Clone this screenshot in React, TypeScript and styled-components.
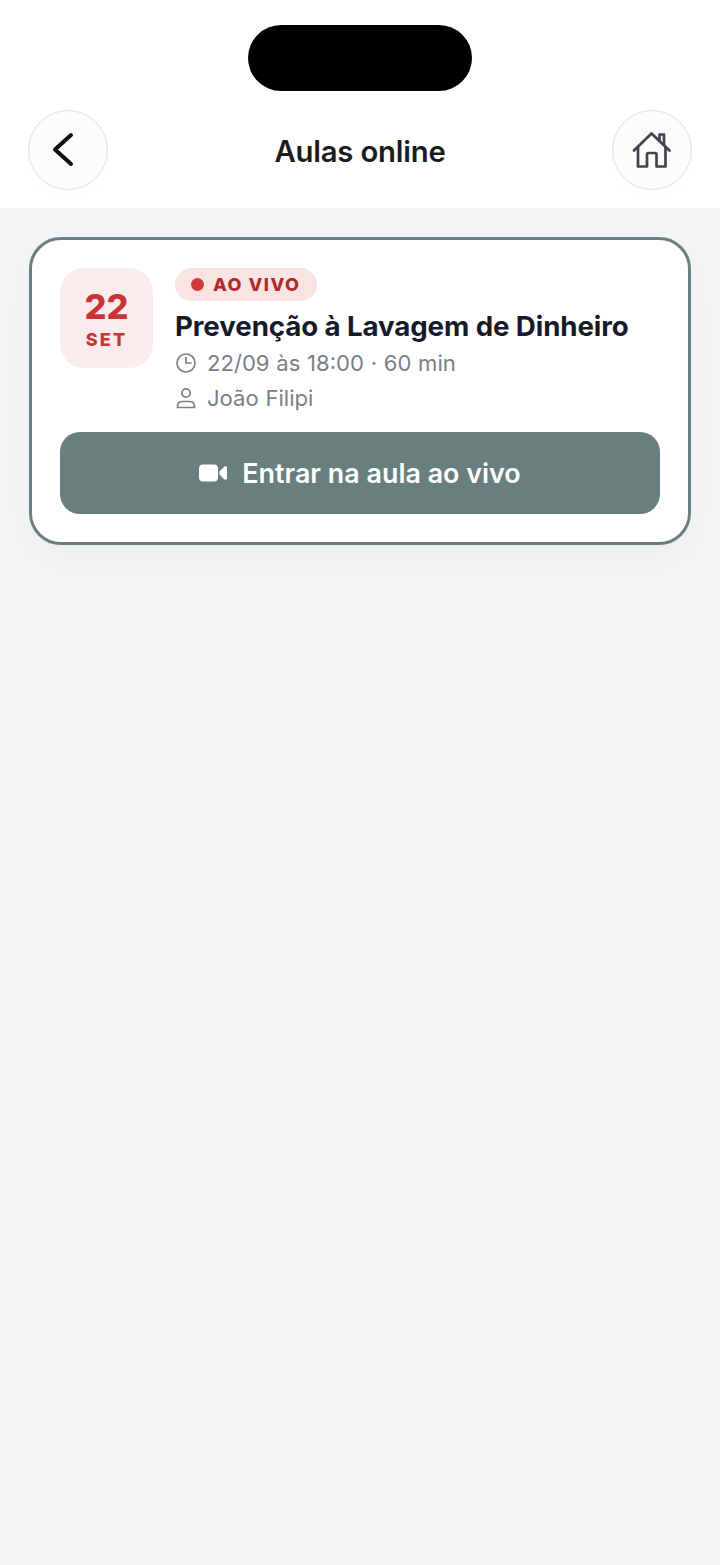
import styled, { createGlobalStyle } from 'styled-components';

const GlobalStyle = createGlobalStyle`
  html, body {
    margin: 0;
    padding: 0;
    background: #f2f4f6;
    font-family: Inter, "Liberation Sans", sans-serif;
    -webkit-font-smoothing: antialiased;
  }
`;

const Page = styled.div`
  width: 720px;
  height: 1565px;
  background: #f2f4f6;
  overflow: hidden;
`;

const Header = styled.header`
  height: 208px;
  box-sizing: border-box;
  background: #ffffff;
  padding: 25px 28px 0;
  display: flex;
  flex-direction: column;
`;

const Island = styled.div`
  width: 224px;
  height: 66px;
  margin: 0 auto 19px;
  border-radius: 33px;
  background: #000000;
`;

const NavRow = styled.div`
  display: flex;
  align-items: center;
  justify-content: space-between;
`;

const RoundButton = styled.button`
  width: 80px;
  height: 80px;
  padding: 0;
  box-sizing: border-box;
  border: 1px solid #e0e0e0;
  border-radius: 50%;
  background: radial-gradient(circle at 50% 45%, #fbfbfb 0%, #fcfcfc 65%, #ffffff 100%);
  box-shadow: 0 8px 14px rgba(0, 0, 0, 0.012);
  display: flex;
  align-items: center;
  justify-content: center;
`;

const Title = styled.h1`
  margin: 0;
  padding-top: 2px;
  font-size: 29.3px;
  font-weight: 600;
  letter-spacing: -0.2px;
  color: #1c1c1e;
`;

const Content = styled.main`
  padding: 29px 29px 0;
`;

const Card = styled.section`
  box-sizing: border-box;
  width: 662px;
  height: 308px;
  padding: 28px;
  border: 3px solid #6a807d;
  border-radius: 32px;
  background: #ffffff;
  box-shadow: 0 14px 40px rgba(20, 30, 40, 0.03);
  display: flex;
  flex-direction: column;
  gap: 17px;
`;

const Top = styled.div`
  display: flex;
  gap: 22px;
`;

const DateBox = styled.div`
  width: 93px;
  height: 100px;
  flex-shrink: 0;
  box-sizing: border-box;
  padding-top: 4px;
  border-radius: 24px;
  background: #faecec;
  color: #c93434;
  display: flex;
  flex-direction: column;
  align-items: center;
  justify-content: center;
`;

const Day = styled.span`
  font-size: 34.5px;
  line-height: 38px;
  font-weight: 800;
`;

const Month = styled.span`
  margin-top: 2px;
  font-size: 18px;
  line-height: 24px;
  font-weight: 800;
  letter-spacing: 2.2px;
`;

const Info = styled.div`
  display: flex;
  flex-direction: column;
  align-items: flex-start;
  min-width: 0;
`;

const LiveBadge = styled.div`
  height: 33px;
  box-sizing: border-box;
  padding: 0 17px 0 16px;
  border-radius: 17px;
  background: #fae3e3;
  color: #b12a2a;
  display: flex;
  align-items: center;
  gap: 9px;
  font-size: 18px;
  font-weight: 800;
  letter-spacing: 1.5px;
`;

const LiveDot = styled.span`
  width: 13px;
  height: 13px;
  border-radius: 50%;
  background: #d13b3b;
`;

const LessonTitle = styled.h2`
  margin: 7px 0 1px;
  font-size: 27.7px;
  line-height: 36px;
  font-weight: 700;
  letter-spacing: -0.1px;
  color: #171a2b;
  white-space: nowrap;
`;

const MetaRow = styled.div`
  height: 35px;
  display: flex;
  align-items: center;
  gap: 10px;
  font-size: 22.1px;
  word-spacing: 0.5px;
  color: #7b7e87;
  white-space: nowrap;
`;

const JoinButton = styled.button`
  height: 82px;
  flex-shrink: 0;
  border: 0;
  border-radius: 20px;
  background: #687f7e;
  color: #ffffff;
  font-family: inherit;
  font-size: 26.9px;
  font-weight: 600;
  display: flex;
  align-items: center;
  justify-content: center;
  gap: 15px;
`;

const BackIcon = () => (
  <svg width="30" height="40" viewBox="0 0 30 40" fill="none" style={{ marginLeft: -6 }}>
    <path d="M21 5 5 19.500 21 34" stroke="#111" strokeWidth="4" strokeLinecap="round" strokeLinejoin="round" />
  </svg>
);

const HomeIcon = () => (
  <svg width="40" height="38" viewBox="0 0 40 38" fill="none" stroke="#41434f" strokeWidth="2.7" strokeLinecap="round" strokeLinejoin="round">
    <path d="M2 19.500 19.500 2.500 37.500 19.500" />
    <path d="M27.500 9V3.500h4.500V14" />
    <path d="M6 16.500v19h9V23.500a1.500 1.500 0 0 1 1.500-1.500h6.500a1.500 1.500 0 0 1 1.500 1.500v12h9v-19" />
  </svg>
);

const ClockIcon = () => (
  <svg width="22" height="22" viewBox="0 0 22 22" fill="none" stroke="#7b7e87" strokeWidth="1.7" strokeLinecap="round" strokeLinejoin="round">
    <circle cx="11" cy="11" r="9" />
    <path d="M11 5.500V11h5" />
  </svg>
);

const PersonIcon = () => (
  <svg width="22" height="22" viewBox="0 0 22 22" fill="none" stroke="#7b7e87" strokeWidth="1.7" strokeLinecap="round" strokeLinejoin="round">
    <circle cx="11" cy="6" r="4.200" />
    <path d="M2.500 20.500v-1.500c0-3 2.500-4.500 5.500-4.500h6c3 0 5.500 1.500 5.500 4.500v1.500z" />
  </svg>
);

const VideoIcon = () => (
  <svg width="28" height="18" viewBox="0 0 28 18" fill="#ffffff">
    <rect x="0" y="0.500" width="19" height="17" rx="4" />
    <path d="M20.500 7.500 25.500 2.600c.7-.6 2.500-.3 2.500.8v11.200c0 1.100-1.800 1.400-2.500.8l-5-4.900z" />
  </svg>
);

export default function App() {
  return (
    <Page>
      <GlobalStyle />
      <Header>
        <Island />
        <NavRow>
          <RoundButton aria-label="Voltar">
            <BackIcon />
          </RoundButton>
          <Title>Aulas online</Title>
          <RoundButton aria-label="Início">
            <HomeIcon />
          </RoundButton>
        </NavRow>
      </Header>
      <Content>
        <Card>
          <Top>
            <DateBox>
              <Day>22</Day>
              <Month>SET</Month>
            </DateBox>
            <Info>
              <LiveBadge>
                <LiveDot />
                AO VIVO
              </LiveBadge>
              <LessonTitle>Prevenção à Lavagem de Dinheiro</LessonTitle>
              <MetaRow>
                <ClockIcon />
                22/09 às 18:00 · 60 min
              </MetaRow>
              <MetaRow>
                <PersonIcon />
                João Filipi
              </MetaRow>
            </Info>
          </Top>
          <JoinButton>
            <VideoIcon />
            Entrar na aula ao vivo
          </JoinButton>
        </Card>
      </Content>
    </Page>
  );
}
